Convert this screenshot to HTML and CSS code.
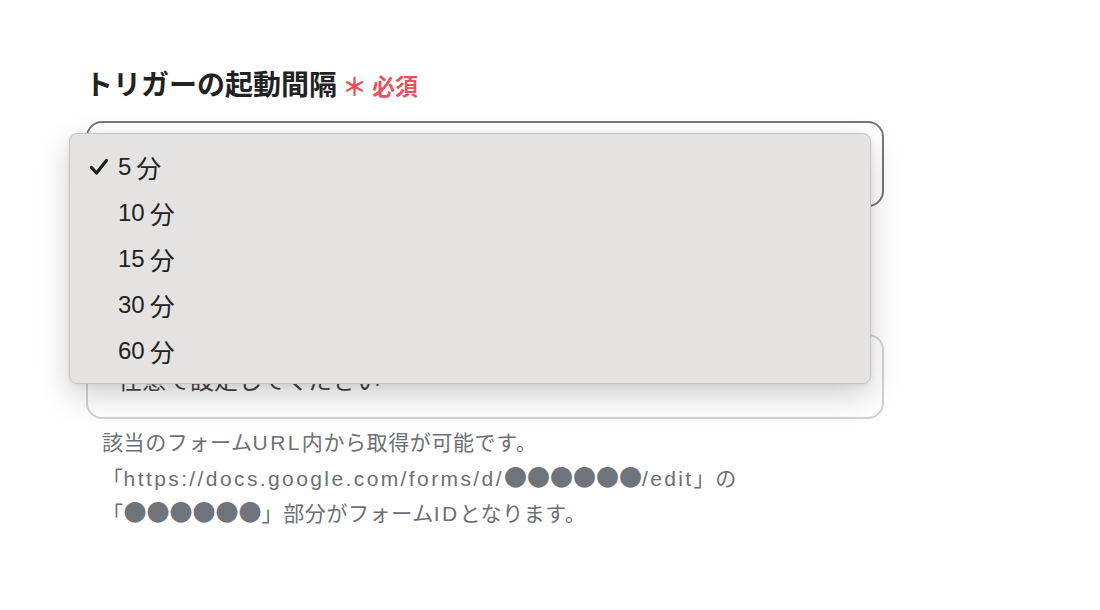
FILE: index.html
```html
<!DOCTYPE html>
<html lang="ja">
<head>
<meta charset="utf-8">
<link rel="stylesheet" href="styles.css">
</head>
<body>
<main class="form">
  <div class="field">
    <div class="label">トリガーの起動間隔<span class="req"><span class="ast">＊</span>必須</span></div>
    <div class="select-wrap">
      <div class="select">5分</div>
      <ul class="menu">
        <li class="item checked"><span class="check"><svg width="20" height="18" viewBox="0 0 20 18"><path d="M2.5 9.5 L7.5 15 L17.5 2.5" fill="none" stroke="#1e1e1e" stroke-width="3.2" stroke-linecap="round" stroke-linejoin="round"/></svg></span>5<span class="unit">分</span></li>
        <li class="item"><span class="check"></span>10<span class="unit">分</span></li>
        <li class="item"><span class="check"></span>15<span class="unit">分</span></li>
        <li class="item"><span class="check"></span>30<span class="unit">分</span></li>
        <li class="item"><span class="check"></span>60<span class="unit">分</span></li>
      </ul>
    </div>
  </div>
  <div class="field second">
    <div class="label">フォームID<span class="req"><span class="ast">＊</span>必須</span></div>
    <div class="input">任意で設定してください</div>
    <div class="help">
      <p>該当のフォーム<span class="lat">URL</span>内から取得が可能です。</p>
      <p>「<span class="lat">https://docs.google.com/forms/d/</span><span class="dots">●●●●●●</span><span class="lat">/edit</span>」の</p>
      <p>「<span class="dots">●●●●●●</span>」部分がフォーム<span class="lat">ID</span>となります。</p>
    </div>
  </div>
</main>
</body>
</html>
```
FILE: styles.css
```css
* { box-sizing: border-box; }
html, body { margin: 0; padding: 0; background: #fff; }
body {
  font-family: "Liberation Sans", "Noto Sans CJK JP", sans-serif;
  color: #222;
}
.form {
  width: 798px;
  margin-left: 86px;
  padding-top: 64px;
}
.label {
  font-family: "Noto Sans CJK JP", sans-serif;
  font-weight: 700;
  font-size: 28px;
  height: 38px;
  line-height: 38px;
  color: #222;
  display: flex;
  align-items: center;
  white-space: nowrap;
  margin-left: -1px;
}
.req {
  color: #e5545e;
  font-size: 23px;
  margin-left: 5px;
  display: inline-flex;
  align-items: center;
  padding-top: 3px;
}
.ast { font-size: 25px; margin-right: 5px; }
.select-wrap {
  position: relative;
  margin-top: 19px;
}
.select {
  height: 86px;
  border: 2px solid #767676;
  border-radius: 16px;
  padding: 0 30px;
  font-size: 24px;
  line-height: 82px;
}
.menu {
  position: absolute;
  left: -17px;
  top: 12px;
  width: 802px;
  height: 251px;
  margin: 0;
  padding: 10px 0 0;
  list-style: none;
  background: #e4e3e2;
  border: 1px solid #c4c3c2;
  border-radius: 8px;
  box-shadow: 0 12px 32px rgba(0,0,0,0.18), 0 2px 6px rgba(0,0,0,0.06);
  z-index: 2;
}
.item {
  height: 46px;
  display: flex;
  align-items: center;
  padding-left: 19px;
  font-size: 24px;
  color: #222;
}
.check {
  width: 29px;
  display: flex;
  align-items: center;
}
.unit {
  font-family: "Noto Sans CJK JP", sans-serif;
  font-size: 25px;
  margin-left: 5px;
}
.second { margin-top: 70px; }
.second .label { visibility: hidden; }
.input {
  margin-top: 19px;
  height: 85px;
  border: 2px solid #d2d3d6;
  border-radius: 16px;
  padding: 4px 30px 0;
  font-family: "Noto Sans CJK JP", sans-serif;
  font-size: 24px;
  line-height: 78px;
  color: #444;
}
.help {
  padding: 5px 16px 0;
  font-family: "Noto Sans CJK JP", sans-serif;
  font-size: 21px;
  letter-spacing: 0.6px;
  color: #6b6f76;
}
.help p {
  margin: 0;
  height: 35px;
  line-height: 35px;
  white-space: nowrap;
}
.lat {
  font-family: "Liberation Sans", sans-serif;
  letter-spacing: 2.4px;
}
.dots {
  font-family: "Noto Sans CJK JP", sans-serif;
  font-size: 23px;
  letter-spacing: 0;
  color: #6f747b;
}
```
